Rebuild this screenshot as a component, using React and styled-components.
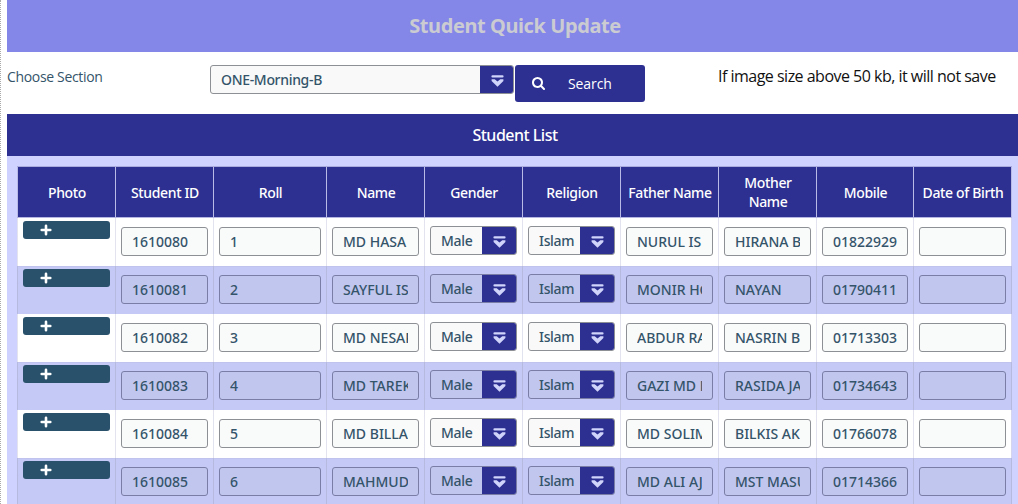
import React from "react";
import styled, { createGlobalStyle, css } from "styled-components";

const NAVY = "#2d3091";
const TEXT = "#34546a";

const GlobalStyle = createGlobalStyle`
  * { box-sizing: border-box; }
  html, body { margin: 0; padding: 0; background: #fff; overflow: hidden; }
  body { font-family: "Noto Sans", "Open Sans", sans-serif; font-size: 14px; color: ${TEXT}; }
`;

const Page = styled.main`
  width: 1018px;
  height: 504px;
  overflow: hidden;
  border-left: 1px dotted #aaa;
  padding-left: 6px;
`;

const TitleBar = styled.header`
  height: 52px;
  display: flex;
  align-items: center;
  justify-content: center;
  padding-left: 5px;
  background: #8486e8;
`;

const Title = styled.h1`
  margin: 0;
  font: 700 20px/26px "Noto Sans", sans-serif;
  letter-spacing: -0.42px;
  color: #cbcbd2;
  white-space: nowrap;
`;

const FilterRow = styled.section`
  height: 62px;
  display: flex;
  align-items: flex-start;
  padding-top: 13px;
`;

const FieldLabel = styled.label`
  width: 203px;
  padding-top: 2px;
  font: 400 14px/20px "Open Sans", sans-serif;
  letter-spacing: -0.33px;
  white-space: nowrap;
`;

const SearchButton = styled.button`
  width: 130px;
  height: 37px;
  margin: 0 73px 0 1px;
  padding: 0 0 0 17px;
  display: flex;
  align-items: center;
  gap: 23px;
  border: 0;
  border-radius: 3px;
  background: ${NAVY};
  color: #fff;
  font: 400 14px/20px "Open Sans", sans-serif;
  letter-spacing: -0.1px;
`;

const Note = styled.p`
  margin: 0;
  font: 400 16px/22px "Open Sans", sans-serif;
  letter-spacing: -0.51px;
  color: #111;
  white-space: nowrap;
`;

const ListTitle = styled.h2`
  height: 42px;
  margin: 0;
  padding-left: 5px;
  display: flex;
  align-items: center;
  justify-content: center;
  background: ${NAVY};
  color: #fff;
  font: 500 16px/22px "Noto Sans", sans-serif;
  letter-spacing: -0.5px;
`;

const Panel = styled.section`
  padding: 10px 6px 0 10px;
  height: 348px;
  background: #cfd1ff;
`;

const Table = styled.div`
  width: 995px;
`;

const rowGrid = css`
  display: grid;
  grid-template-columns: 98px 98px 113px 98px 98px 98px 98px 98px 97px 99px;
`;

const HeadRow = styled.div`
  ${rowGrid}
  height: 52px;
  border-top: 1px solid #a9abdf;
  border-bottom: 1px solid #b5b7e2;
  background: ${NAVY};
`;

const HeadCell = styled.div`
  display: flex;
  align-items: center;
  justify-content: center;
  padding: 0 0 0 1px;
  border-left: 1px solid #b9bbe6;
  color: #fff;
  font-weight: 500;
  letter-spacing: -0.36px;
  line-height: 19px;
  text-align: center;
  white-space: pre-line;
  &:last-child { border-right: 1px solid #b9bbe6; }
`;

const Row = styled.div`
  ${rowGrid}
  height: 48px;
  background: ${(p) => (p.$shaded ? "#c5c9f5" : "#fff")};
  border-top: ${(p) => (p.$shaded ? "1px solid #bfc3ee" : "0")};
`;

const Cell = styled.div`
  padding: ${(p) => p.$top}px 5px 0;
  border-left: 1px solid ${(p) => (p.$shaded ? "#b6badf" : "#e2e3ee")};
  margin-top: ${(p) => (p.$shaded ? "-1px" : "0")};
  &:last-child { border-right: 1px solid ${(p) => (p.$shaded ? "#b6badf" : "#d5d6ee")}; }
`;

const AddButton = styled.button`
  width: 100%;
  height: 18px;
  padding: 0 0 0 17px;
  display: flex;
  align-items: center;
  border: 0;
  border-radius: 3px;
  background: #29516b;
  color: #fff;
`;

const Field = styled.div`
  height: 29px;
  padding: 0 10px;
  border: 1px solid ${(p) => (p.$shaded ? "#7a7ea6" : "#8d9094")};
  border-radius: 3px;
  background: ${(p) => (p.$shaded ? "#c1c6ef" : "#f9fafa")};
`;

const FieldText = styled.div`
  height: 27px;
  overflow: hidden;
  white-space: nowrap;
  line-height: 28px;
  font-weight: 500;
`;

const SelectBox = styled.div`
  width: ${(p) => p.$width || "100%"};
  height: 29px;
  display: flex;
  justify-content: space-between;
  overflow: hidden;
  border: 1px solid ${(p) => (p.$shaded ? "#7a7ea6" : "#8d9094")};
  border-radius: 3px;
  background: ${(p) => (p.$shaded ? "#c1c6ef" : "#f9f9f9")};
`;

const SelectText = styled.span`
  padding-left: 10px;
  line-height: 27px;
  font-weight: 500;
  letter-spacing: -0.32px;
  white-space: nowrap;
`;

const SelectArrow = styled.span`
  width: ${(p) => (p.$wide ? 33 : 34)}px;
  flex: none;
  display: flex;
  align-items: center;
  padding: 2px 0 0 ${(p) => (p.$wide ? 11 : 11)}px;
  background: ${NAVY};
`;

const ArrowIcon = () => (
  <svg width="13" height="12" viewBox="0 0 13 12">
    <path d="M1.500 1.400h10" stroke="#d0d4fb" strokeWidth="2.200" strokeLinecap="round" />
    <path d="M.6 4.200h3.100l2.800 2.400 2.800-2.400h3.100v1.900L6.500 11.800.6 6.100z" fill="#d0d4fb" />
  </svg>
);

const SearchIcon = () => (
  <svg width="13" height="13" viewBox="0 0 1664 1664" fill="#fff">
    <path d="M1152 704q0-185-131.500-316.500T704 256 387.500 387.500 256 704t131.500 316.500T704 1152t316.500-131.500T1152 704zm512 832q0 52-38 90t-90 38q-54 0-90-38l-343-342q-179 124-399 124-143 0-273.500-55.500t-225-150-150-225T0 704t55.500-273.500 150-225 225-150T704 0t273.500 55.500 225 150 150 225T1408 704q0 220-124 399l343 343q37 37 37 90z" />
  </svg>
);

const PlusIcon = () => (
  <svg width="12" height="12" viewBox="0 0 12 12">
    <path d="M6 1.700v8.600M1.700 6h8.600" stroke="#fff" strokeWidth="2.600" strokeLinecap="round" />
  </svg>
);

const Select = ({ value, shaded, width }) => (
  <SelectBox $shaded={shaded} $width={width}>
    <SelectText>{value}</SelectText>
    <SelectArrow $wide={Boolean(width)}><ArrowIcon /></SelectArrow>
  </SelectBox>
);

const headings = ["Photo", "Student ID", "Roll", "Name", "Gender", "Religion", "Father Name", "Mother\nName", "Mobile", "Date of Birth"];

const students = [
  ["1610080", "1", "MD HASA", "NURUL IS", "HIRANA B", "01822929"],
  ["1610081", "2", "SAYFUL IS", "MONIR HO", "NAYAN", "01790411"],
  ["1610082", "3", "MD NESAR", "ABDUR RA", "NASRIN B", "01713303"],
  ["1610083", "4", "MD TAREK", "GAZI MD B", "RASIDA JA", "01734643"],
  ["1610084", "5", "MD BILLA", "MD SOLIM", "BILKIS AK", "01766078"],
  ["1610085", "6", "MAHMUD", "MD ALI AJ", "MST MASU", "01714366"],
];

const InputCell = ({ value, shaded }) => (
  <Cell $top={9} $shaded={shaded}>
    <Field $shaded={shaded}><FieldText>{value}</FieldText></Field>
  </Cell>
);

const StudentRow = ({ data, shaded }) => {
  const [id, roll, name, father, mother, mobile] = data;
  return (
    <Row $shaded={shaded}>
      <Cell $top={3} $shaded={shaded}>
        <AddButton aria-label="Add photo"><PlusIcon /></AddButton>
      </Cell>
      <InputCell value={id} shaded={shaded} />
      <InputCell value={roll} shaded={shaded} />
      <InputCell value={name} shaded={shaded} />
      <Cell $top={8} $shaded={shaded}><Select value="Male" shaded={shaded} /></Cell>
      <Cell $top={8} $shaded={shaded}><Select value="Islam" shaded={shaded} /></Cell>
      <InputCell value={father} shaded={shaded} />
      <InputCell value={mother} shaded={shaded} />
      <InputCell value={mobile} shaded={shaded} />
      <InputCell value="" shaded={shaded} />
    </Row>
  );
};

export default function App() {
  return (
    <Page>
      <GlobalStyle />
      <TitleBar><Title>Student Quick Update</Title></TitleBar>
      <FilterRow>
        <FieldLabel>Choose Section</FieldLabel>
        <Select value="ONE-Morning-B" width="304px" />
        <SearchButton><SearchIcon />Search</SearchButton>
        <Note>If image size above 50 kb, it will not save</Note>
      </FilterRow>
      <ListTitle>Student List</ListTitle>
      <Panel>
        <Table>
          <HeadRow>
            {headings.map((h) => <HeadCell key={h}>{h}</HeadCell>)}
          </HeadRow>
          {students.map((s, i) => <StudentRow key={s[0]} data={s} shaded={i % 2 === 1} />)}
        </Table>
      </Panel>
    </Page>
  );
}
